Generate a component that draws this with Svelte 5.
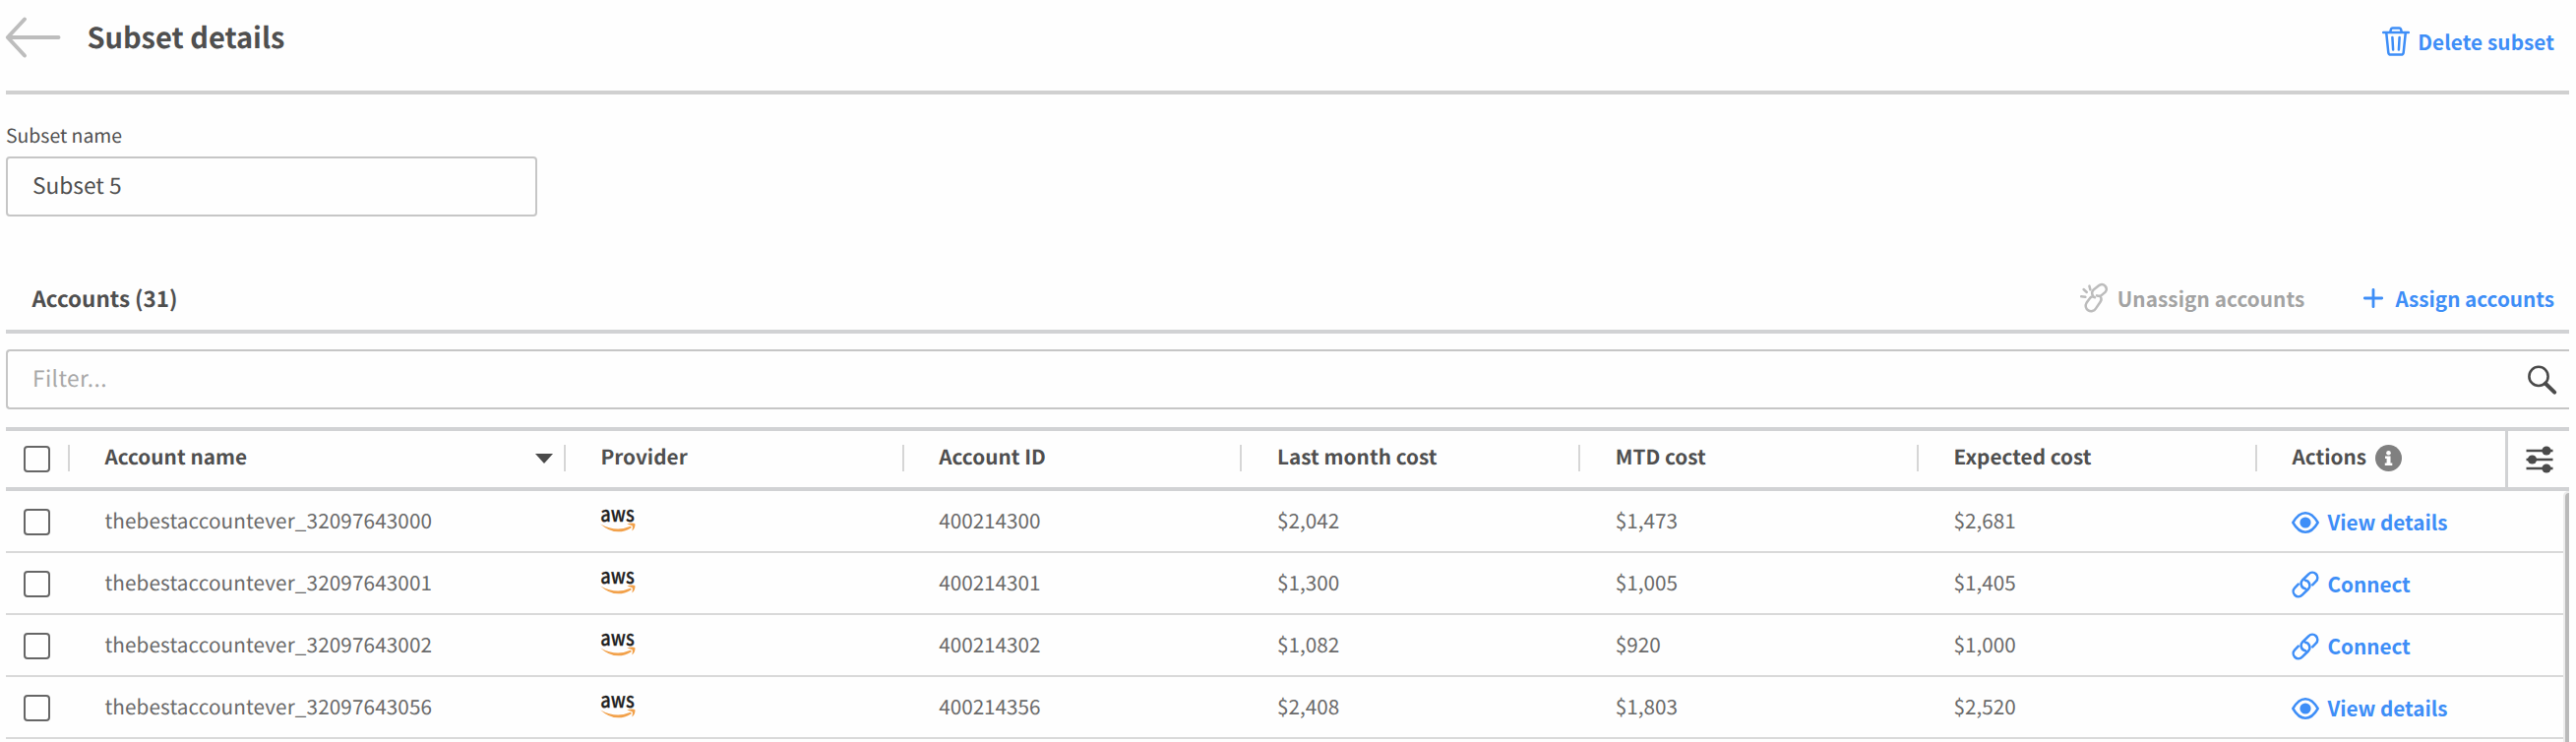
<script>
  const columns = ['Provider', 'Account ID', 'Last month cost', 'MTD cost', 'Expected cost'];

  const rows = [
    { name: 'thebestaccountever_32097643000', id: '400214300', last: '$2,042', mtd: '$1,473', expected: '$2,681', connected: true },
    { name: 'thebestaccountever_32097643001', id: '400214301', last: '$1,300', mtd: '$1,005', expected: '$1,405', connected: false },
    { name: 'thebestaccountever_32097643002', id: '400214302', last: '$1,082', mtd: '$920', expected: '$1,000', connected: false },
    { name: 'thebestaccountever_32097643056', id: '400214356', last: '$2,408', mtd: '$1,803', expected: '$2,520', connected: true }
  ];
</script>

<main class="page">
  <header class="topbar">
    <svg class="back" width="58" height="42" viewBox="0 0 58 42">
      <path d="M53.5 21H2.5M19 2.5L1.8 21L19 39.5" />
    </svg>
    <h1>Subset details</h1>
    <button class="link delete">
      <svg class="line" width="28" height="30" viewBox="0 0 28 30">
        <path d="M1.2 6H26.8M8.2 5.5L9 2.7Q9.4 1.4 10.7 1.4H17.3Q18.6 1.4 19 2.7L19.8 5.5M4.2 6L6.3 26.3Q6.6 28.6 8.8 28.6H19.2Q21.4 28.6 21.7 26.3L23.8 6M10.4 11L11.1 23.5M17.6 11L16.9 23.5" />
      </svg>
      <span>Delete subset</span>
    </button>
  </header>

  <section class="field">
    <div class="label">Subset name</div>
    <div class="input"><span>Subset 5</span></div>
  </section>

  <section class="bar">
    <h2>Accounts (31)</h2>
    <button class="link disabled">
      <svg class="line unlink" width="30" height="30" viewBox="0 0 30 30">
        <path d="M17 12.3Q20 13.6 22.3 11.6L25.8 8.6A4.7 4.7 0 0 0 19.6 1.8L13.3 6.8Q11 9.3 13.2 12.9M20.5 13.2Q22.6 15.8 20.6 18.8L15.9 25.6A5.2 5.2 0 0 1 6.5 19.8L9.6 15.5Q12 12 15 14.3M9.4 2.6L10.4 6.4M3.6 6L6.8 9M1.2 13.3L5.4 13.8" />
      </svg>
      <span>Unassign accounts</span>
    </button>
    <button class="link assign">
      <svg class="line plus" width="20" height="20" viewBox="0 0 20 20"><path d="M10 1.3V18.7M1.3 10H18.7" /></svg>
      <span>Assign accounts</span>
    </button>
  </section>

  <div class="filter">
    <span>Filter...</span>
    <svg width="32" height="32" viewBox="0 0 32 32">
      <circle cx="12" cy="12.4" r="9.6" />
      <path d="M19 19.7L28.2 28.6" />
    </svg>
  </div>

  <div class="head">
    <div class="cell check"><i class="box"></i><i class="sep"></i></div>
    <div class="cell">
      <span>Account name</span>
      <svg class="sort" width="18" height="10" viewBox="0 0 18 10"><path d="M0 0H18L9 10Z" /></svg>
      <i class="sep"></i>
    </div>
    {#each columns as column}
      <div class="cell"><span>{column}</span><i class="sep"></i></div>
    {/each}
    <div class="cell actions">
      <span>Actions</span>
      <svg width="27" height="27" viewBox="0 0 27 27">
        <circle cx="13.5" cy="13.5" r="13.5" fill="#808080" />
        <circle cx="13.5" cy="8.2" r="2.3" fill="#fff" />
        <path d="M10 11.5H15.5V18.4H17.3V20.9H9.8V18.4H11.6V14H10Z" fill="#fff" />
      </svg>
    </div>
    <div class="cell settings">
      <svg width="28" height="28" viewBox="0 0 28 28">
        <path d="M.5 5H27.5M.5 14H27.5M.5 23H27.5" stroke="#4a4a4a" stroke-width="2.6" />
        <g fill="#4a4a4a"><circle cx="21" cy="5" r="4.6" /><circle cx="6.5" cy="14" r="4.6" /><circle cx="21" cy="23" r="4.6" /></g>
      </svg>
    </div>
  </div>

  <div class="body">
    <div class="rows">
      {#each rows as row}
        <div class="row">
          <div class="cell check"><i class="box"></i></div>
          <div class="cell name"><span>{row.name}</span></div>
          <div class="cell">
            <svg class="aws" width="37" height="26" viewBox="0 0 37 26">
              <text x="0.3" y="13.6" textLength="34.4" lengthAdjust="spacingAndGlyphs">aws</text>
              <path d="M.2 16.4Q16 25.2 30.6 18.8Q32.2 19 31.4 20.4Q15.5 30 .2 16.4Z" />
              <path d="M27.2 16.8Q32.4 14.4 35.4 16.2Q36 20.4 32.3 23.6Q33.2 19.8 32.8 18.4Q31.4 17.7 27.2 16.8Z" />
            </svg>
          </div>
          <div class="cell"><span>{row.id}</span></div>
          <div class="cell"><span>{row.last}</span></div>
          <div class="cell"><span>{row.mtd}</span></div>
          <div class="cell"><span>{row.expected}</span></div>
          <div class="cell">
            <button class="link">
              {#if row.connected}
                <svg class="line" width="28" height="28" viewBox="0 0 28 28">
                  <path d="M1.3 14Q7 4.2 14 4.2T26.7 14Q21 23.8 14 23.8T1.3 14Z" />
                  <circle class="pupil" cx="14" cy="14" r="5.6" />
                </svg>
                <span>View details</span>
              {:else}
                <svg class="line" width="28" height="28" viewBox="0 0 28 28">
                  <path d="M21.2 14.3L24.8 10.7A5.2 5.2 0 0 0 17.3 3.3L11 9.5A5.2 5.2 0 0 0 14 18.2M6.8 13.7L3.2 17.3A5.2 5.2 0 0 0 10.7 24.7L17 18.5A5.2 5.2 0 0 0 14 9.8" />
                </svg>
                <span>Connect</span>
              {/if}
            </button>
          </div>
        </div>
      {/each}
    </div>
    <div class="track"><div class="thumb"></div></div>
  </div>
</main>

<style>
  :global(body) { background: #fefefe; overflow: hidden; }
  .page {
    box-sizing: border-box;
    width: 2618px;
    height: 754px;
    padding: 0 7px 0 6px;
    display: flex;
    flex-direction: column;
    overflow: hidden;
    background: #fefefe;
    color: #4f4f4f;
    font-family: "Noto Sans CJK SC", "Noto Sans CJK JP", "Noto Sans", sans-serif;
    font-size: 20.7px;
    line-height: 28px;
    white-space: nowrap;
    text-rendering: geometricPrecision;
  }
  h1, h2 { margin: 0; font-weight: 700; }
  svg { display: block; flex: none; fill: none; overflow: visible; }

  .topbar {
    box-sizing: border-box;
    height: 96px;
    flex: none;
    display: flex;
    align-items: flex-start;
    border-bottom: 4px solid #d0d0d0;
  }
  .back { margin-top: 17px; stroke: #bdbdbd; stroke-width: 4; stroke-linecap: round; stroke-linejoin: round; }
  h1 { margin: 17px auto 0 24.5px; font-size: 29px; line-height: 40px; }

  .link {
    display: flex;
    align-items: center;
    gap: 8px;
    padding: 0;
    border: 0;
    background: none;
    color: #3e8ef7;
    font: inherit;
    font-weight: 700;
  }
  .line { stroke: currentColor; stroke-width: 2.5; stroke-linecap: round; stroke-linejoin: round; }
  .pupil { fill: currentColor; stroke: none; }
  .delete { margin: 27px 15px 0 0; letter-spacing: .1px; }
  .delete span { padding-bottom: 1px; }

  .field { flex: none; height: 178px; }
  .label { padding: 27px 0 8px; height: 28px; font-size: 19.4px; }
  .input, .filter {
    box-sizing: border-box;
    height: 61px;
    display: flex;
    align-items: center;
    border: 2px solid #c6c6c6;
    border-radius: 4px;
    padding: 0 25px;
    font-size: 22.7px;
  }
  .input { width: 540px; }
  .input span, .filter span { padding-bottom: 4px; }

  .bar {
    box-sizing: border-box;
    flex: none;
    display: flex;
    align-items: center;
    height: 65px;
    padding: 0 15px 4px 26.5px;
    border-bottom: 4px solid #d1d2d4;
  }
  h2 { margin-right: auto; font-size: 22.4px; }
  .disabled { color: #a3a3a3; margin-right: 60px; }
  .disabled span { letter-spacing: .1px; }
  .unlink { color: #bcbcbc; }
  .plus { stroke-width: 2.8; }
  .assign { gap: 12px; }

  .filter {
    flex: none;
    margin: 16px 0 18px;
    padding-right: 11px;
    justify-content: space-between;
    border-right: 0;
    border-radius: 4px 0 0 4px;
    color: #a8a8a8;
    letter-spacing: .4px;
  }
  .filter svg { stroke: #4a4a4a; stroke-width: 2.6; stroke-linecap: round; }
  .filter path { stroke-width: 4; }

  .head, .row {
    box-sizing: border-box;
    display: grid;
    grid-template-columns: 63.8px 504px repeat(5, 343.8px) 1fr;
  }
  .head {
    flex: none;
    height: 65px;
    grid-template-columns: 63.8px 504px repeat(5, 343.8px) 1fr 65px;
    border-top: 4px solid #d1d2d4;
    border-bottom: 4px solid #d1d2d4;
    font-weight: 700;
    letter-spacing: .05px;
  }
  .cell { display: flex; align-items: center; padding-left: 36.6px; min-width: 0; }
  .check { padding-left: 17.5px; }
  .box { box-sizing: border-box; width: 27px; height: 27px; border: 2px solid #666; border-radius: 4px; }
  .sep { width: 2px; height: 27px; margin: 0 -1px 2px auto; background: #d6d6d6; }
  .head span { padding-bottom: 7px; }
  .sort { margin: 0 -12px 2px auto; fill: #4a4a4a; }
  .sort + .sep { margin-left: 23px; }
  .actions { gap: 9px; }
  .actions svg { margin-bottom: 2px; }
  .settings { border-left: 3px solid #d1d2d4; padding-left: 18px; }

  .body { flex: 1; display: flex; min-height: 0; }
  .rows { flex: 1; }
  .row { height: 63px; border-bottom: 2px solid #d9d9d9; color: #6a6a6a; }
  .row > .cell > span { padding-bottom: 4px; }
  .row .name { letter-spacing: .12px; }
  .row .box { margin-top: 2px; }
  .row .link svg { margin-top: 2px; }
  .aws { margin-bottom: 1px; }
  .aws text { font: 500 21.4px "Noto Sans CJK SC", sans-serif; fill: #202020; stroke: #202020; stroke-width: .3; }
  .aws path { fill: #f2a14a; }
  .track { width: 6px; background: #ececec; border-top-left-radius: 5px; }
  .thumb { height: 100%; margin: 2px 0 0 2px; background: #bababa; border-top-left-radius: 4px; }
</style>
